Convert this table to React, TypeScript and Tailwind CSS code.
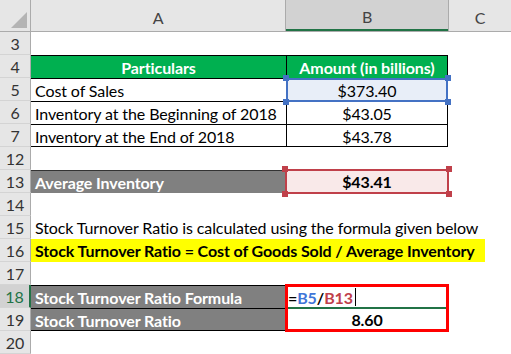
import React from "react"

const rowHead = "w-[31px] shrink-0 h-full flex items-center justify-center border-r border-b border-r-[#ababab] border-b-[#d4d4d4] bg-[#e6e6e6] text-[#333]"

function Row({ n, selected, children }: { n: number; selected?: boolean; children?: React.ReactNode }) {
  return (
    <div className="flex h-[23px] leading-[23px]">
      <div
        className={
          selected
            ? "w-[31px] shrink-0 h-full flex items-center justify-center border-b border-b-[#d4d4d4] border-r-2 border-r-[#217346] bg-[#d2d2d2] text-[#217346]"
            : rowHead
        }
      >
        {n}
      </div>
      {children}
    </div>
  )
}

function Handles({ color }: { color: string }) {
  const sq = `absolute w-[6px] h-[6px] ${color}`
  return (
    <>
      <div className={`${sq} -left-[3px] -top-[3px]`} />
      <div className={`${sq} -right-[3px] -top-[3px]`} />
      <div className={`${sq} -left-[3px] -bottom-[3px]`} />
      <div className={`${sq} -right-[3px] -bottom-[3px]`} />
    </>
  )
}

export default function App() {
  return (
    <div className="w-[511px] h-[354px] overflow-hidden bg-white font-['Lato',sans-serif] text-[16px] tracking-[-0.1px] text-black">
      {/* column headers */}
      <div className="flex h-[32px] bg-[#e6e6e6] border-b border-[#ababab] text-[#444]">
        <div className="w-[31px] shrink-0 border-r border-[#ababab] relative">
          <svg className="absolute right-[3px] bottom-[3px]" width="16" height="16" viewBox="0 0 16 16">
            <polygon points="16,0 16,16 0,16" fill="#b4b4b4" />
          </svg>
        </div>
        <div className="w-[255px] shrink-0 border-r border-[#ababab] flex items-center justify-center pt-[4px]">A</div>
        <div className="w-[162px] shrink-0 bg-[#d2d2d2] border-b-2 border-[#217346] flex items-center justify-center pt-[4px]">B</div>
        <div className="flex-1 border-l border-[#ababab] flex items-center justify-center pt-[4px]">C</div>
      </div>

      <Row n={3} />
      <Row n={4}>
        <div className="w-[255px] shrink-0 bg-[#00b050] border-t border-black text-white font-bold text-center">Particulars</div>
        <div className="w-[162px] shrink-0 bg-[#00b050] border-t border-x border-black text-white font-bold text-center">Amount (in billions)</div>
      </Row>
      <Row n={5}>
        <div className="w-[255px] shrink-0 border-t border-black pl-[4px]">Cost of Sales</div>
        <div className="w-[162px] shrink-0 border-t border-x border-black text-center relative bg-[#e8eef8]">
          $373.40
          <div className="absolute -left-[1px] -top-[1px] -right-[1px] -bottom-[1px] border-2 border-[#4472c4]" />
          <div className="absolute -left-[1px] -top-[1px] -right-[1px] -bottom-[1px]">
            <Handles color="bg-[#4472c4]" />
          </div>
        </div>
      </Row>
      <Row n={6}>
        <div className="w-[255px] shrink-0 border-t border-black pl-[4px] whitespace-nowrap">Inventory at the Beginning of 2018</div>
        <div className="w-[162px] shrink-0 border-t border-x border-black text-center">$43.05</div>
      </Row>
      <Row n={7}>
        <div className="w-[255px] shrink-0 border-y border-black pl-[4px] whitespace-nowrap">Inventory at the End of 2018</div>
        <div className="w-[162px] shrink-0 border border-black text-center">$43.78</div>
      </Row>
      <Row n={12} />
      <Row n={13}>
        <div className="w-[255px] shrink-0 bg-[#808080] border-t border-[#333] text-white font-bold pl-[4px]">Average Inventory</div>
        <div className="w-[162px] shrink-0 text-center font-bold relative bg-[#f9e9e9]">
          $43.41
          <div className="absolute -left-[1px] -top-[1px] -right-[1px] -bottom-[1px] border-2 border-[#c0404a]" />
          <div className="absolute -left-[1px] -top-[1px] -right-[1px] -bottom-[1px]">
            <Handles color="bg-[#c0404a]" />
          </div>
        </div>
      </Row>
      <Row n={14} />
      <Row n={15}>
        <div className="w-[255px] shrink-0 pl-[4px] whitespace-nowrap">Stock Turnover Ratio is calculated using the formula given below</div>
      </Row>
      <Row n={16}>
        <div className="w-[454px] shrink-0 bg-[#ffff00] pl-[4px] font-bold whitespace-nowrap">
          Stock Turnover Ratio = Cost of Goods Sold / Average Inventory
        </div>
      </Row>
      <Row n={17} />
      <Row n={18} selected>
        <div className="w-[255px] shrink-0 bg-[#808080] border-t border-black text-white font-bold pl-[4px]">Stock Turnover Ratio Formula</div>
        <div className="w-[162px] shrink-0 relative border-t border-black font-bold pl-[2px] flex items-center">
          <span>=</span>
          <span className="text-[#3f76d8]">B5</span>
          <span>/</span>
          <span className="text-[#c0404a]">B13</span>
          <span className="w-px h-[18px] bg-black ml-[2px]" />
          <div className="absolute left-[1px] right-[1px] -bottom-[1px] h-[2px] bg-[#217346]" />
          <div className="absolute -left-[1px] -top-[2px] w-[164px] h-[48px] border-[3px] border-[#ff0000]" />
        </div>
      </Row>
      <Row n={19}>
        <div className="w-[255px] shrink-0 bg-[#808080] border-y border-black text-white font-bold pl-[4px]">Stock Turnover Ratio</div>
        <div className="w-[162px] shrink-0 text-center font-bold">8.60</div>
      </Row>
      <Row n={20} />
    </div>
  )
}
